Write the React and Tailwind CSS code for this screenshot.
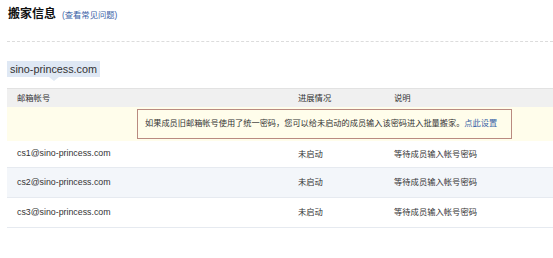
import React from 'react'

const FONT = "font-['Liberation_Sans','Noto_Sans_CJK_SC',sans-serif]"

const rows = [
  { email: 'cs1@sino-princess.com', status: '未启动', note: '等待成员输入帐号密码', h: 'h-[27px]', bg: 'bg-white' },
  { email: 'cs2@sino-princess.com', status: '未启动', note: '等待成员输入帐号密码', h: 'h-[30px]', bg: 'bg-[#f3f6fa]' },
  { email: 'cs3@sino-princess.com', status: '未启动', note: '等待成员输入帐号密码', h: 'h-[30px]', bg: 'bg-white' },
]

export default function App() {
  return (
    <div className={`w-[553px] h-[258px] bg-white overflow-hidden ${FONT} text-[#333]`}>
      {/* ── Title ── */}
      <div className="flex items-baseline pl-[8px] pt-[6px] h-[24px]">
        <h1 className="text-[12px] font-bold text-[#111] leading-[16px]">搬家信息</h1>
        <a className="ml-[6px] text-[8.3px] text-[#3a62a6] leading-[10px]">(查看常见问题)</a>
      </div>

      {/* ── Dashed divider ── */}
      <div className="mt-[17px] ml-[7px] border-t border-dashed border-[#dcdcdc]" />

      {/* ── Domain tag ── */}
      <div className="mt-[19px] ml-[7px] relative inline-block">
        <span className="block bg-[#dfe8f4] px-[3px] h-[16px] leading-[16px] text-[10.8px] text-[#333]">
          sino-princess.com
        </span>
        <span className="absolute left-[42px] top-[16px] w-0 h-0 border-l-[5px] border-r-[5px] border-t-[4px] border-l-transparent border-r-transparent border-t-[#dfe8f4]" />
      </div>

      {/* ── Table ── */}
      <div className="ml-[7px] mt-[8px]">
        <div className="grid grid-cols-[281px_96px_1fr] pl-[10px] h-[19px] items-center bg-[#f0f0f0] border-t border-[#e2e2e2] text-[8.3px] text-[#333]">
          <span>邮箱帐号</span>
          <span>进展情况</span>
          <span>说明</span>
        </div>

        <div className="h-[34px] bg-[#fffdeb] pt-[2px]">
          <div className="ml-[130px] w-[375px] h-[30px] border border-[#b98a80] flex items-center pl-[7px] text-[8.2px] text-[#333] whitespace-nowrap">
            如果成员旧邮箱帐号使用了统一密码，您可以给未启动的成员输入该密码进入批量搬家。
            <a className="text-[#3a62a6]">点此设置</a>
          </div>
        </div>

        {rows.map(r => (
          <div key={r.email}
            className={`grid grid-cols-[281px_96px_1fr] pl-[10px] ${r.h} ${r.bg} items-center border-b border-[#e6eaf0] text-[#333]`}>
            <span className="text-[8.8px]">{r.email}</span>
            <span className="text-[8.3px]">{r.status}</span>
            <span className="text-[8.3px]">{r.note}</span>
          </div>
        ))}
      </div>
    </div>
  )
}
